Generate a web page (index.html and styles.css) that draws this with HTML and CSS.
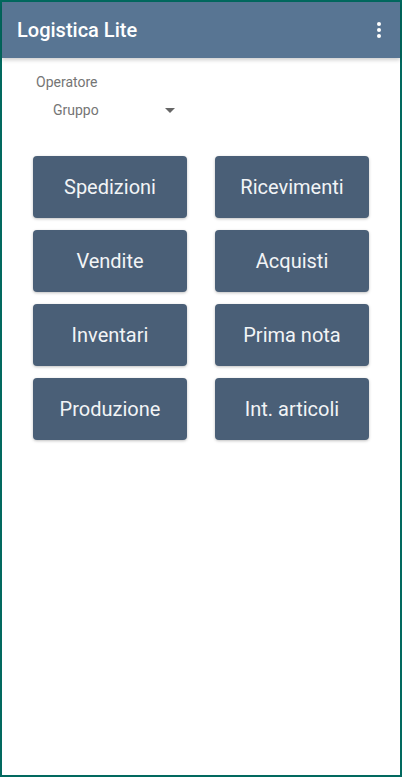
FILE: index.html
```html
<!DOCTYPE html>
<html lang="it">
<head>
  <meta charset="UTF-8">
  <title>Logistica Lite</title>
  <link rel="stylesheet" href="styles.css">
</head>
<body>
  <div class="frame">
    <header class="toolbar">
      <h1>Logistica Lite</h1>
      <svg class="menu" width="24" height="24" viewBox="0 0 24 24">
        <circle cx="12" cy="6" r="2" fill="#fff"/>
        <circle cx="12" cy="12" r="2" fill="#fff"/>
        <circle cx="12" cy="18" r="2" fill="#fff"/>
      </svg>
    </header>

    <div class="operator">
      <label>Operatore</label>
      <div class="select">
        <span>Gruppo</span>
        <svg width="10" height="5" viewBox="0 0 10 5"><path d="M0 0h10L5 5z" fill="#666"/></svg>
      </div>
    </div>

    <div class="grid">
      <button>Spedizioni</button>
      <button>Ricevimenti</button>
      <button>Vendite</button>
      <button>Acquisti</button>
      <button>Inventari</button>
      <button>Prima nota</button>
      <button>Produzione</button>
      <button>Int. articoli</button>
    </div>
  </div>
</body>
</html>
```

FILE: styles.css
```css
html, body { margin: 0; height: 100%; }
body {
  font-family: Roboto, 'Noto Sans', sans-serif;
  background: #fff;
}
.frame {
  box-sizing: border-box;
  height: 777px;
  border: 2px solid #02695f;
  background: #fff;
}
.toolbar {
  height: 56px;
  background: #587593;
  display: flex;
  align-items: center;
  justify-content: space-between;
  padding: 0 9px 0 15px;
  box-shadow: 0 2px 4px rgba(0,0,0,0.2);
  position: relative;
}
.toolbar h1 {
  margin: 0;
  color: #fff;
  font-size: 20px;
  font-weight: 500;
}
.operator {
  padding: 14px 0 0 34px;
}
.operator label {
  display: block;
  font-size: 14px;
  line-height: 20px;
  color: #757575;
}
.select {
  display: flex;
  align-items: center;
  justify-content: space-between;
  width: 122px;
  height: 36px;
  padding-left: 17px;
  font-size: 14px;
  color: #757575;
}
.grid {
  display: grid;
  grid-template-columns: 154px 154px;
  column-gap: 28px;
  row-gap: 12px;
  padding: 28px 31px 0;
}
.grid button {
  height: 62px;
  border: none;
  border-radius: 4px;
  background: #4a5f77;
  color: #f2f4f6;
  font-family: Roboto, sans-serif;
  font-size: 20px;
  box-shadow: 0 1px 3px rgba(0,0,0,0.25);
  cursor: pointer;
}
```
